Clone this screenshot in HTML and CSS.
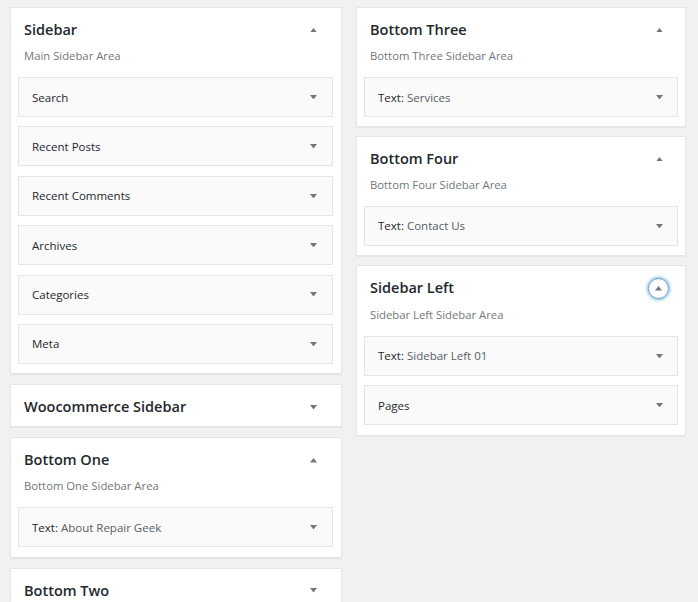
FILE: index.html
```html
<!DOCTYPE html>
<html lang="en">
<head>
<meta charset="utf-8">
<title>Widgets</title>
<link rel="stylesheet" href="styles.css">
</head>
<body>
<div class="layout">
  <div class="column">
    <section class="card">
      <div class="card-head"><h2>Sidebar</h2><span class="toggle"><svg viewBox="0 0 8 5"><polygon points="0,5 8,5 4,0"/></svg></span></div>
      <p class="desc">Main Sidebar Area</p>
      <div class="widget"><span class="wt">Search</span><span class="arrow"><svg viewBox="0 0 8 5"><polygon points="0,0 8,0 4,5"/></svg></span></div>
      <div class="widget"><span class="wt">Recent Posts</span><span class="arrow"><svg viewBox="0 0 8 5"><polygon points="0,0 8,0 4,5"/></svg></span></div>
      <div class="widget"><span class="wt">Recent Comments</span><span class="arrow"><svg viewBox="0 0 8 5"><polygon points="0,0 8,0 4,5"/></svg></span></div>
      <div class="widget"><span class="wt">Archives</span><span class="arrow"><svg viewBox="0 0 8 5"><polygon points="0,0 8,0 4,5"/></svg></span></div>
      <div class="widget"><span class="wt">Categories</span><span class="arrow"><svg viewBox="0 0 8 5"><polygon points="0,0 8,0 4,5"/></svg></span></div>
      <div class="widget"><span class="wt">Meta</span><span class="arrow"><svg viewBox="0 0 8 5"><polygon points="0,0 8,0 4,5"/></svg></span></div>
    </section>
    <section class="card collapsed">
      <div class="card-head"><h2>Woocommerce Sidebar</h2><span class="toggle"><svg viewBox="0 0 8 5"><polygon points="0,0 8,0 4,5"/></svg></span></div>
    </section>
    <section class="card">
      <div class="card-head"><h2>Bottom One</h2><span class="toggle"><svg viewBox="0 0 8 5"><polygon points="0,5 8,5 4,0"/></svg></span></div>
      <p class="desc">Bottom One Sidebar Area</p>
      <div class="widget"><span class="wt">Text:<span class="in"> About Repair Geek</span></span><span class="arrow"><svg viewBox="0 0 8 5"><polygon points="0,0 8,0 4,5"/></svg></span></div>
    </section>
    <section class="card collapsed">
      <div class="card-head"><h2>Bottom Two</h2><span class="toggle"><svg viewBox="0 0 8 5"><polygon points="0,0 8,0 4,5"/></svg></span></div>
    </section>
  </div>
  <div class="column right">
    <section class="card">
      <div class="card-head"><h2>Bottom Three</h2><span class="toggle"><svg viewBox="0 0 8 5"><polygon points="0,5 8,5 4,0"/></svg></span></div>
      <p class="desc">Bottom Three Sidebar Area</p>
      <div class="widget"><span class="wt">Text:<span class="in"> Services</span></span><span class="arrow"><svg viewBox="0 0 8 5"><polygon points="0,0 8,0 4,5"/></svg></span></div>
    </section>
    <section class="card">
      <div class="card-head"><h2>Bottom Four</h2><span class="toggle"><svg viewBox="0 0 8 5"><polygon points="0,5 8,5 4,0"/></svg></span></div>
      <p class="desc">Bottom Four Sidebar Area</p>
      <div class="widget"><span class="wt">Text:<span class="in"> Contact Us</span></span><span class="arrow"><svg viewBox="0 0 8 5"><polygon points="0,0 8,0 4,5"/></svg></span></div>
    </section>
    <section class="card">
      <div class="card-head"><h2>Sidebar Left</h2><span class="toggle focused"><svg viewBox="0 0 8 5"><polygon points="0,5 8,5 4,0"/></svg></span></div>
      <p class="desc">Sidebar Left Sidebar Area</p>
      <div class="widget"><span class="wt">Text:<span class="in"> Sidebar Left 01</span></span><span class="arrow"><svg viewBox="0 0 8 5"><polygon points="0,0 8,0 4,5"/></svg></span></div>
      <div class="widget"><span class="wt">Pages</span><span class="arrow"><svg viewBox="0 0 8 5"><polygon points="0,0 8,0 4,5"/></svg></span></div>
    </section>
  </div>
</div>
</body>
</html>
```
FILE: styles.css
```css
* { box-sizing: border-box; }
html, body { margin: 0; padding: 0; }
body {
  background: #f1f1f1;
  font-family: "Open Sans", "Noto Sans", sans-serif;
  color: #23282d;
  height: 602px;
  overflow: hidden;
}
.layout {
  display: grid;
  grid-template-columns: 332px 330px;
  column-gap: 14px;
  padding: 7px 0 0 10px;
  align-items: start;
}
.column {
  display: flex;
  flex-direction: column;
  gap: 10px;
}
.column.right { gap: 8.5px; }
.card {
  background: #fff;
  border: 1px solid #e5e5e5;
  box-shadow: 0 1px 1px rgba(0,0,0,.04);
  padding: 0 8px 0 7px;
}
.column.right .card { padding: 0 7px; }
.card-head {
  display: flex;
  align-items: center;
  justify-content: space-between;
  padding: 12px 0 0 6px;
}
.card.collapsed .card-head { padding-bottom: 9px; }
.card-head h2 {
  margin: 0;
  font-size: 14.5px;
  font-weight: 600;
  line-height: 20px;
  color: #23282d;
}
.toggle {
  width: 20px;
  height: 20px;
  margin-right: 10px;
  border-radius: 50%;
  display: flex;
  align-items: center;
  justify-content: center;
}
.column.right .toggle { margin-right: 9px; }
.toggle svg, .arrow svg {
  width: 7px;
  height: 4.5px;
  fill: #72777c;
  display: block;
}
.toggle.focused {
  width: 21px;
  height: 21px;
  border: 1px solid #5b9dd9;
  box-shadow: 0 0 3px 1px rgba(30,140,190,.55);
}
.desc {
  margin: 8px 0 13px 6px;
  font-size: 11.3px;
  line-height: 16px;
  color: #72777c;
}
.widget {
  height: 40px;
  margin-bottom: 9.4px;
  background: #fafafa;
  border: 1px solid #e5e5e5;
  display: flex;
  align-items: center;
  justify-content: space-between;
  padding: 0 9px 0 13px;
}
.column.right .widget { padding-right: 8px; }
.wt {
  font-size: 11.5px;
  color: #23282d;
}
.wt .in { color: #555d66; }
.arrow {
  width: 20px;
  height: 20px;
  display: flex;
  align-items: center;
  justify-content: center;
}
```
